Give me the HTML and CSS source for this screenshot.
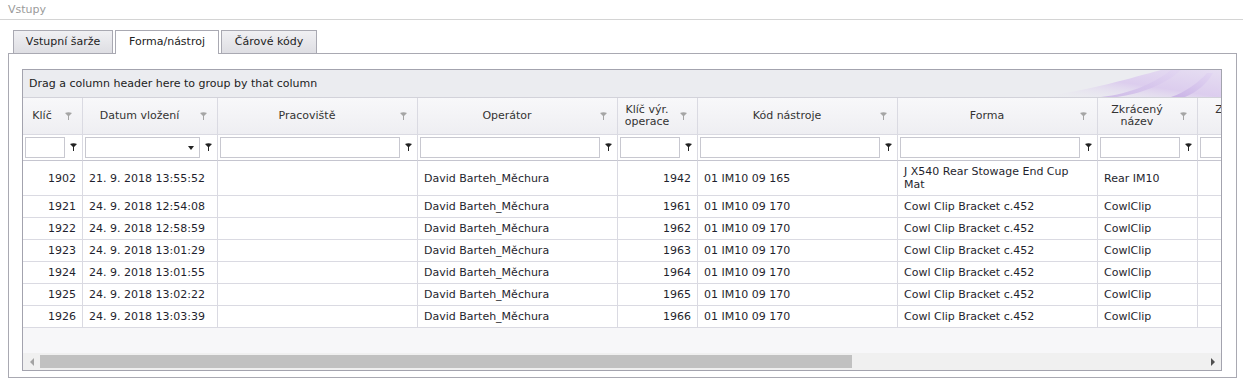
FILE: index.html
```html
<!DOCTYPE html>
<html lang="cs">
<head>
    <meta charset="UTF-8">
    <title>Vstupy</title>
    <link rel="stylesheet" href="styles.css">
</head>
<body>
    <div class="title">Vstupy</div>

    <!-- Záložky -->
    <div class="tabs">
        <div class="tab t1">Vstupní šarže</div>
        <div class="tab t2 active">Forma/nástroj</div>
        <div class="tab t3">Čárové kódy</div>
    </div>

    <div class="panel">
        <div class="grid">
            <div class="group-panel">
                <span>Drag a column header here to group by that column</span>
                <svg class="swoosh" width="200" height="27" viewBox="0 0 200 27">
                    <defs>
                        <linearGradient id="sw1" x1="0" y1="1" x2="1" y2="0">
                            <stop offset="0" stop-color="#ebecf0" stop-opacity="0"/>
                            <stop offset="0.5" stop-color="#dccdee"/>
                            <stop offset="1" stop-color="#e6def2"/>
                        </linearGradient>
                        <linearGradient id="sw2" x1="0" y1="1" x2="1" y2="0">
                            <stop offset="0" stop-color="#c9b2e6"/>
                            <stop offset="1" stop-color="#e2d6f2"/>
                        </linearGradient>
                    </defs>
                    <path d="M20 27 C70 20 110 8 140 0 L200 0 L200 27 Z" fill="url(#sw1)"/>
                    <path d="M80 27 C110 24 135 12 150 0 L160 0 C145 14 120 24 96 27 Z" fill="url(#sw2)" opacity="0.8"/>
                    <path d="M150 27 C165 22 178 12 186 3 L192 3 C186 14 176 22 164 27 Z" fill="url(#sw2)"/>
                </svg>
            </div>

            <div class="viewport">
                <div class="row head">
                    <div class="hc"><span class="ht">Klíč</span><svg class="fi" width="7" height="9" viewBox="0 0 7 9"><path d="M0 1 Q3.5 -0.5 7 1 L4 4 V8 H3 V4 Z"/></svg></div>
                    <div class="hc"><span class="ht">Datum vložení</span><svg class="fi" width="7" height="9" viewBox="0 0 7 9"><path d="M0 1 Q3.5 -0.5 7 1 L4 4 V8 H3 V4 Z"/></svg></div>
                    <div class="hc"><span class="ht">Pracoviště</span><svg class="fi" width="7" height="9" viewBox="0 0 7 9"><path d="M0 1 Q3.5 -0.5 7 1 L4 4 V8 H3 V4 Z"/></svg></div>
                    <div class="hc"><span class="ht">Operátor</span><svg class="fi" width="7" height="9" viewBox="0 0 7 9"><path d="M0 1 Q3.5 -0.5 7 1 L4 4 V8 H3 V4 Z"/></svg></div>
                    <div class="hc"><span class="ht">Klíč výr.<br>operace</span><svg class="fi" width="7" height="9" viewBox="0 0 7 9"><path d="M0 1 Q3.5 -0.5 7 1 L4 4 V8 H3 V4 Z"/></svg></div>
                    <div class="hc"><span class="ht">Kód nástroje</span><svg class="fi" width="7" height="9" viewBox="0 0 7 9"><path d="M0 1 Q3.5 -0.5 7 1 L4 4 V8 H3 V4 Z"/></svg></div>
                    <div class="hc"><span class="ht">Forma</span><svg class="fi" width="7" height="9" viewBox="0 0 7 9"><path d="M0 1 Q3.5 -0.5 7 1 L4 4 V8 H3 V4 Z"/></svg></div>
                    <div class="hc"><span class="ht">Zkrácený<br>název</span><svg class="fi" width="7" height="9" viewBox="0 0 7 9"><path d="M0 1 Q3.5 -0.5 7 1 L4 4 V8 H3 V4 Z"/></svg></div>
                    <div class="hc"><span class="ht">Zkrácený<br>název</span><svg class="fi" width="7" height="9" viewBox="0 0 7 9"><path d="M0 1 Q3.5 -0.5 7 1 L4 4 V8 H3 V4 Z"/></svg></div>
                </div>

                <div class="row filter" id="filterRow"></div>
                <div id="rows"></div>
            </div>

            <div class="empty"></div>

            <div class="hscroll">
                <span class="arr left"></span>
                <div class="track"><div class="thumb"></div></div>
                <span class="arr right"></span>
            </div>
        </div>
    </div>

    <script>
        // Filtrační řádek
        const filterRow = document.getElementById('filterRow');
        const funnel = '<svg class="fi" width="7" height="9" viewBox="0 0 7 9"><path d="M0 1 Q3.5 -0.5 7 1 L4 4 V8 H3 V4 Z"/></svg>';
        for (let i = 0; i < 9; i++) {
            const cell = document.createElement('div');
            cell.className = 'fc';
            cell.innerHTML = '<div class="fin">' + (i === 1 ? '<span class="dd"></span>' : '') + '</div>' + funnel;
            filterRow.appendChild(cell);
        }

        // Data
        const data = [
            ['1902', '21. 9. 2018 13:55:52', 'David Barteh_Měchura', '1942', '01 IM10 09 165', 'J X540 Rear Stowage End Cup Mat', 'Rear IM10'],
            ['1921', '24. 9. 2018 12:54:08', 'David Barteh_Měchura', '1961', '01 IM10 09 170', 'Cowl Clip Bracket c.452', 'CowlClip'],
            ['1922', '24. 9. 2018 12:58:59', 'David Barteh_Měchura', '1962', '01 IM10 09 170', 'Cowl Clip Bracket c.452', 'CowlClip'],
            ['1923', '24. 9. 2018 13:01:29', 'David Barteh_Měchura', '1963', '01 IM10 09 170', 'Cowl Clip Bracket c.452', 'CowlClip'],
            ['1924', '24. 9. 2018 13:01:55', 'David Barteh_Měchura', '1964', '01 IM10 09 170', 'Cowl Clip Bracket c.452', 'CowlClip'],
            ['1925', '24. 9. 2018 13:02:22', 'David Barteh_Měchura', '1965', '01 IM10 09 170', 'Cowl Clip Bracket c.452', 'CowlClip'],
            ['1926', '24. 9. 2018 13:03:39', 'David Barteh_Měchura', '1966', '01 IM10 09 170', 'Cowl Clip Bracket c.452', 'CowlClip']
        ];
        const rows = document.getElementById('rows');
        data.forEach((d, i) => {
            const row = document.createElement('div');
            row.className = 'row data' + (i === 0 ? ' tall' : '');
            row.innerHTML = `
                <div class="c num">${d[0]}</div>
                <div class="c">${d[1]}</div>
                <div class="c"></div>
                <div class="c">${d[2]}</div>
                <div class="c num">${d[3]}</div>
                <div class="c">${d[4]}</div>
                <div class="c">${d[5]}</div>
                <div class="c">${d[6]}</div>
                <div class="c"></div>
            `;
            rows.appendChild(row);
        });
    </script>
</body>
</html>
```

FILE: styles.css
```css
body {
    margin: 0;
    font-family: 'DejaVu Sans', Verdana, sans-serif;
    font-size: 11px;
    color: #222;
    background: #fff;
}
.title {
    height: 19px;
    line-height: 19px;
    padding-left: 8px;
    color: #9a9a9a;
    border-bottom: 1px solid #d4d4d4;
}
/* Záložky */
.tabs {
    display: flex;
    gap: 2px;
    margin-top: 10px;
    padding-left: 13px;
    height: 23px;
}
.tab {
    box-sizing: border-box;
    height: 23px;
    line-height: 21px;
    text-align: center;
    border: 1px solid #a9a9b2;
    border-bottom: none;
    background: linear-gradient(#f0f0f3, #dedee3);
    color: #222;
}
.t1 { width: 100px; }
.t2 { width: 104px; }
.t3 { width: 96px; }
.tab.active {
    background: #fff;
    height: 24px;
    position: relative;
    z-index: 1;
}
.panel {
    box-sizing: border-box;
    margin: 0 6px 0 8px;
    height: 325px;
    border: 1px solid #a9a9b2;
    padding: 15px 14px 6px 13px;
}
/* Mřížka */
.grid {
    border: 1px solid #a3a3ae;
    height: 300px;
    overflow: hidden;
}
.group-panel {
    position: relative;
    height: 27px;
    line-height: 27px;
    padding-left: 6px;
    background: #ebecf0;
    border-bottom: 1px solid #d2d2da;
    color: #222;
    overflow: hidden;
}
.swoosh {
    position: absolute;
    right: 0;
    top: 0;
}
.group-panel span {
    position: relative;
    z-index: 1;
}
.viewport {
    overflow: hidden;
    height: 230px;
}
.row {
    display: grid;
    grid-template-columns: 60px 135px 200px 200px 80px 200px 200px 100px 108px;
    width: 1283px;
}
.row > div {
    box-sizing: border-box;
    border-right: 1px solid #dadae2;
    border-bottom: 1px solid #dadae2;
}
.head {
    height: 37px;
    background: linear-gradient(#f8f8fa, #eeeef2);
}
.hc {
    display: flex;
    align-items: center;
    color: #333;
}
.ht {
    flex: 1;
    text-align: center;
    line-height: 12px;
}
.hc .fi {
    margin: 0 10px 0 4px;
    fill: #a5a5a5;
}
.filter {
    height: 26px;
    background: #fff;
}
.fc {
    display: flex;
    align-items: center;
    padding-left: 2px;
    border-bottom-color: #c5c5cf !important;
}
.fin {
    position: relative;
    flex: 1;
    height: 21px;
    box-sizing: border-box;
    border: 1px solid #c8c8d0;
    background: #fff;
    margin-right: 5px;
}
.dd {
    position: absolute;
    right: 5px;
    top: 8px;
    border-left: 3px solid transparent;
    border-right: 3px solid transparent;
    border-top: 4px solid #222;
}
.fc .fi {
    margin-right: 5px;
    fill: #222;
}
.data {
    height: 22px;
    background: #fff;
}
.data.tall {
    height: 35px;
}
.c {
    display: flex;
    align-items: center;
    padding: 0 6px;
    line-height: 13px;
    color: #1f1f2e;
    white-space: normal;
}
.c.num {
    justify-content: flex-end;
}
.empty {
    height: 25px;
    background: #f7f7f9;
}
/* Vodorovný posuvník */
.hscroll {
    display: flex;
    align-items: center;
    height: 17px;
    background: #f0f0f0;
}
.arr {
    width: 17px;
    height: 17px;
    display: flex;
    align-items: center;
    justify-content: center;
}
.arr::before {
    content: '';
    border-top: 4px solid transparent;
    border-bottom: 4px solid transparent;
}
.arr.left::before {
    border-right: 4px solid #a3a3a3;
}
.arr.right::before {
    border-left: 4px solid #505050;
}
.track {
    flex: 1;
    height: 13px;
}
.thumb {
    width: 812px;
    height: 13px;
    background: #c1c1c1;
}
```
